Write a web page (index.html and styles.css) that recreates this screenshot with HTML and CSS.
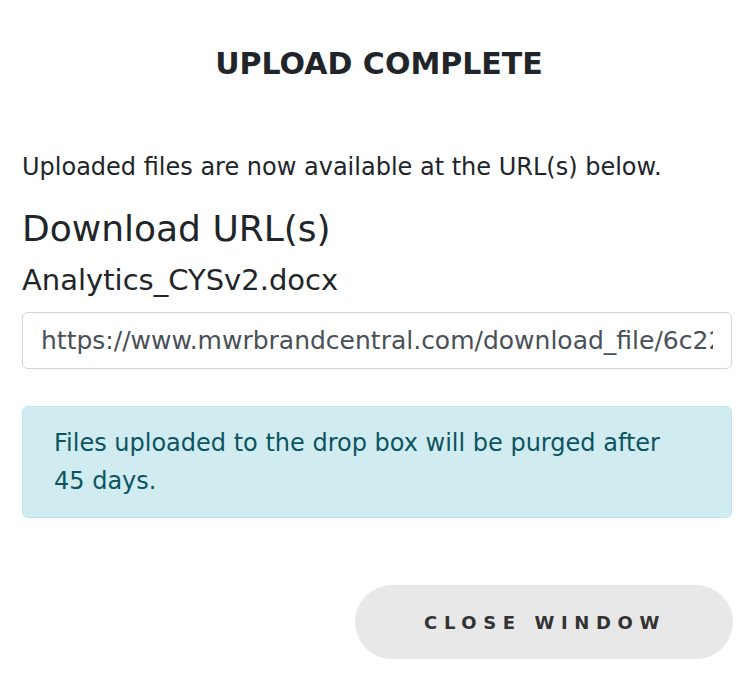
FILE: index.html
```html
<!DOCTYPE html>
<html lang="en">
<head>
  <meta charset="UTF-8">
  <title>Upload Complete</title>
  <link rel="stylesheet" href="styles.css">
</head>
<body>

<div class="modal">
  <h1 class="modal-title">UPLOAD COMPLETE</h1>

  <p class="intro">Uploaded files are now available at the URL(s) below.</p>

  <h2>Download URL(s)</h2>
  <h3>Analytics_CYSv2.docx</h3>
  <input type="text" class="url-box" value="https://www.mwrbrandcentral.com/download_file/6c224a8e1f" readonly>

  <div class="alert-info">
    Files uploaded to the drop box will be purged after 45 days.
  </div>

  <div class="actions">
    <button class="close-btn">Close Window</button>
  </div>
</div>

</body>
</html>
```

FILE: styles.css
```css
body {
  font-family: "DejaVu Sans", sans-serif;
  color: #212529;
  background-color: #fff;
  margin: 0;
  padding: 0;
}

.modal {
  padding: 44px 18px 0 22px;
}

.modal-title {
  margin: 0;
  text-align: center;
  font-size: 30px;
  line-height: 40px;
  font-weight: bold;
  color: #212529;
  padding-left: 4px;
}

.intro {
  margin: 67px 0 0;
  font-size: 24px;
  line-height: 32px;
}

h2 {
  margin: 24px 0 0;
  font-size: 36px;
  font-weight: normal;
  line-height: 44px;
}

h3 {
  margin: 11px 0 0;
  font-size: 29px;
  font-weight: normal;
  line-height: 36px;
}

.url-box {
  display: block;
  box-sizing: border-box;
  width: 100%;
  height: 57px;
  margin-top: 14px;
  padding: 0 18px;
  font-family: inherit;
  font-size: 25px;
  color: #495057;
  border: 1px solid #ced4da;
  border-radius: 6px;
}

.alert-info {
  margin-top: 37px;
  padding: 17px 60px 17px 31px;
  font-size: 24px;
  line-height: 38px;
  color: #0c5460;
  background-color: #d1ecf1;
  border: 1px solid #bee5eb;
  border-radius: 6px;
}

.actions {
  display: flex;
  justify-content: flex-end;
  margin-top: 67px;
}

.close-btn {
  width: 378px;
  height: 74px;
  margin-right: -1px;
  padding-left: 8px;
  font-family: inherit;
  font-size: 18px;
  font-weight: bold;
  letter-spacing: 6.6px;
  text-transform: uppercase;
  color: #333;
  background-color: #e8e8e8;
  border: none;
  border-radius: 37px;
  cursor: pointer;
}
```
